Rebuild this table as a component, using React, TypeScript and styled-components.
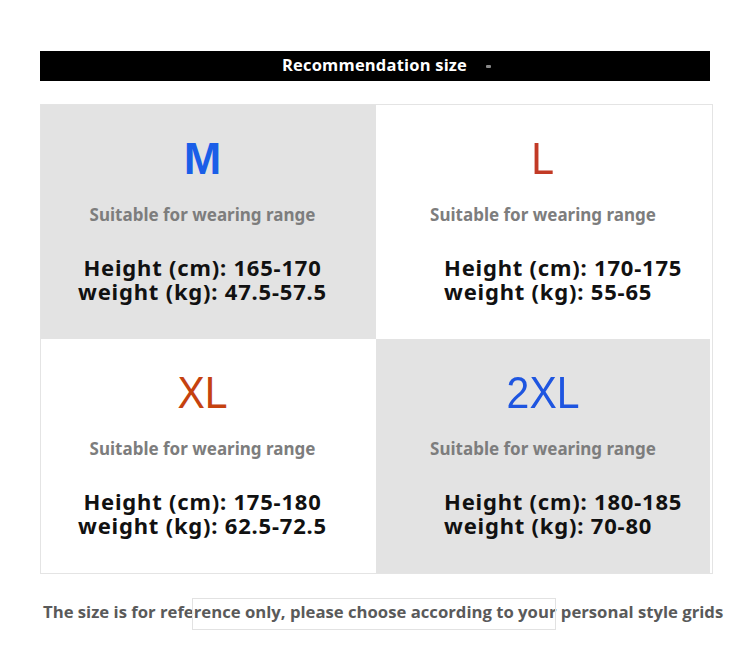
import React from "react";
import styled, { createGlobalStyle } from "styled-components";

const Global = createGlobalStyle`
  html, body { margin: 0; padding: 0; background: #ffffff; }
  body { font-family: "Noto Sans", "Open Sans", sans-serif; }
`;

const Page = styled.div`
  width: 750px;
  height: 653px;
  padding: 51px 40px 0 40px;
  box-sizing: border-box;
  display: flex;
  flex-direction: column;
`;

const TitleBar = styled.div`
  height: 30px;
  width: 670px;
  background: #000000;
  display: flex;
  align-items: center;
  justify-content: center;
  gap: 19px;
  color: #ffffff;
  font-family: "Open Sans", sans-serif;
  font-weight: 700;
  font-size: 16.5px;
  letter-spacing: 0.2px;
  padding-left: 23px;
  padding-bottom: 3px;
  box-sizing: border-box;
`;

const Blip = styled.span`
  width: 5px;
  height: 3px;
  margin-top: 4px;
  background: #888;
  border-radius: 1px;
  filter: blur(0.6px);
`;

const Grid = styled.div`
  margin-top: 23px;
  width: 671px;
  border: 1px solid #e4e4e4;
  display: grid;
  grid-template-columns: 335px 334px;
  grid-template-rows: 234px 234px;
`;

const Cell = styled.div<{ $shade: boolean }>`
  background: ${(p) => (p.$shade ? "#e3e3e3" : "#ffffff")};
  display: flex;
  flex-direction: column;
  align-items: center;
  padding-top: 32px;
  box-sizing: border-box;
`;

const SizeLabel = styled.div<{ $color: string; $bold: boolean; $shift: number }>`
  font-family: "Liberation Sans", Arial, sans-serif;
  font-size: 45px;
  line-height: 44px;
  height: 44px;
  font-weight: ${(p) => (p.$bold ? 700 : 400)};
  color: ${(p) => p.$color};
  transform: translateX(${(p) => p.$shift}px) scaleX(${(p) => (p.$bold ? 1 : 0.91)});
`;

const Suitable = styled.div<{ $shift: number }>`
  margin-top: 24px;
  font-size: 17px;
  line-height: 20px;
  font-weight: 700;
  color: #7d7d7d;
  transform: translateX(${(p) => p.$shift}px);
`;

const Stats = styled.div<{ $left: boolean; $shift: number }>`
  margin-top: 30px;
  align-self: ${(p) => (p.$left ? "flex-start" : "center")};
  margin-left: ${(p) => (p.$left ? "68px" : "0")};
  text-align: ${(p) => (p.$left ? "left" : "center")};
  font-size: 22px;
  letter-spacing: 0.8px;
  line-height: 24px;
  font-weight: 700;
  color: #111111;
  transform: translateX(${(p) => p.$shift}px);
`;

const Footer = styled.div`
  margin-top: 26px;
  margin-left: 3px;
  width: 700px;
  position: relative;
  font-family: "Open Sans", sans-serif;
  font-weight: 700;
  font-size: 16.7px;
  color: #5a5a5a;
  line-height: 24px;
  white-space: nowrap;
`;

const FrameBox = styled.div`
  position: absolute;
  left: 149px;
  top: -2px;
  width: 362px;
  height: 30px;
  border: 1px solid #e2e2e2;
  pointer-events: none;
`;

type Size = {
  label: string;
  color: string;
  bold: boolean;
  shade: boolean;
  height: string;
  weight: string;
  left: boolean;
  shift: number;
};

const sizes: Size[] = [
  { label: "M", color: "#1a5ee8", bold: true, shade: true, height: "165-170", weight: "47.5-57.5", left: false, shift: -6 },
  { label: "L", color: "#c23a26", bold: false, shade: false, height: "170-175", weight: "55-65", left: true, shift: 0 },
  { label: "XL", color: "#c5420f", bold: false, shade: false, height: "175-180", weight: "62.5-72.5", left: false, shift: -6 },
  { label: "2XL", color: "#1e55e0", bold: false, shade: true, height: "180-185", weight: "70-80", left: true, shift: 0 },
];

export default function App() {
  return (
    <>
      <Global />
      <Page>
        <TitleBar>
          <span>Recommendation size</span>
          <Blip />
        </TitleBar>
        <Grid>
          {sizes.map((s) => (
            <Cell key={s.label} $shade={s.shade}>
              <SizeLabel $color={s.color} $bold={s.bold} $shift={s.shift}>
                {s.label}
              </SizeLabel>
              <Suitable $shift={s.shift}>Suitable for wearing range</Suitable>
              <Stats $left={s.left} $shift={s.shift}>
                Height (cm): {s.height}
                <br />
                weight (kg): {s.weight}
              </Stats>
            </Cell>
          ))}
        </Grid>
        <Footer>
          <FrameBox />
          The size is for reference only, please choose according to your personal style grids
        </Footer>
      </Page>
    </>
  );
}
